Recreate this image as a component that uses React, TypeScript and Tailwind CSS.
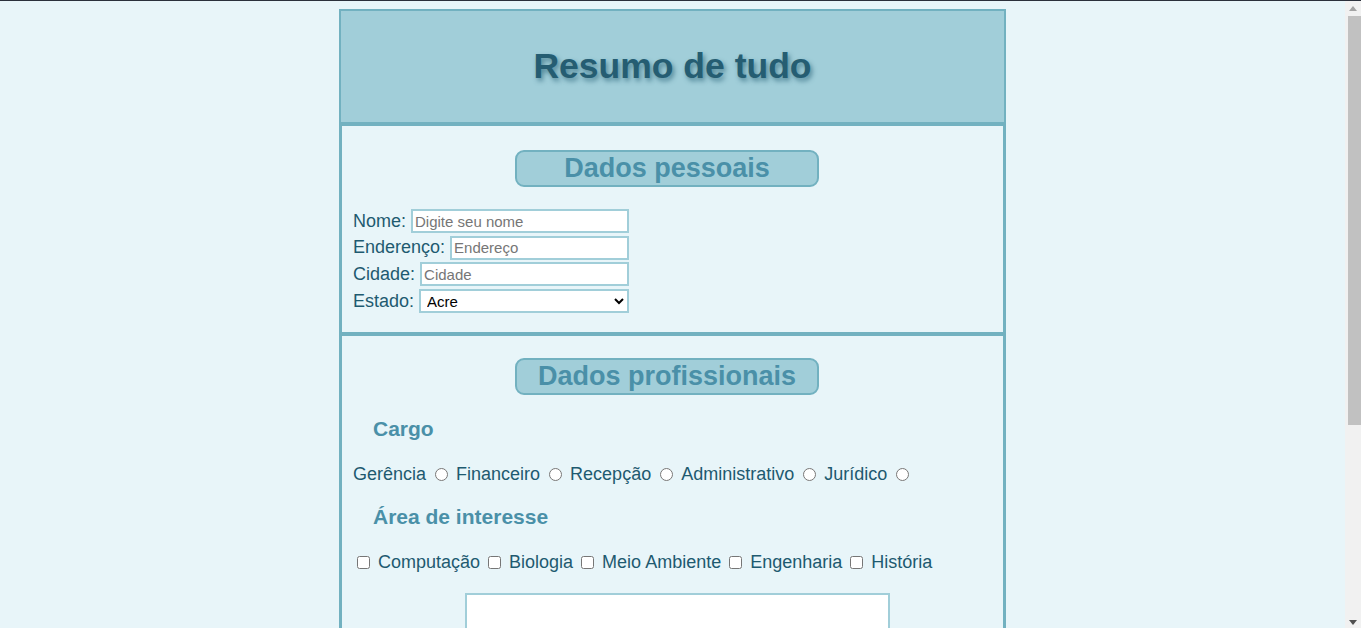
import React from "react";

const cargos = ["Gerência", "Financeiro", "Recepção", "Administrativo", "Jurídico"];
const areas = ["Computação", "Biologia", "Meio Ambiente", "Engenharia", "História"];

function Pill({ children }: { children: React.ReactNode }) {
  return (
    <div className="ml-[162px] flex h-[37px] w-[304px] items-center justify-center rounded-[9px] border-2 border-[#72b1c0] bg-[#a1ced9] text-[27px] font-bold leading-none text-[#4a90a8]">
      {children}
    </div>
  );
}

// barra de rolagem da janela (faz parte da captura)
function ScrollBar() {
  return (
    <div className="sticky top-0 flex h-[628px] w-[16px] shrink-0 flex-col bg-[#f1f1f1]">
      <div className="flex h-[14px] items-center justify-center">
        <svg width="8" height="5" viewBox="0 0 8 5">
          <path d="M0 5 L4 0 L8 5 Z" fill="#a3a3a3" />
        </svg>
      </div>
      <div className="ml-[3px] mt-[1px] h-[409px] w-[13px] bg-[#c1c1c1]" />
      <div className="flex-1" />
      <div className="flex h-[14px] items-center justify-center">
        <svg width="8" height="5" viewBox="0 0 8 5">
          <path d="M0 0 L8 0 L4 5 Z" fill="#505050" />
        </svg>
      </div>
    </div>
  );
}

export default function App() {
  return (
    <div className="bg-[#e8f5f9] font-['Liberation_Sans',Arial,sans-serif]">
      <div className="h-px bg-[#2b303b]" />
      <div className="flex items-start">
        <div className="min-w-0 flex-1 pb-[8px] pt-[8px]">
          <main className="mx-auto w-[667px]">
            {/* Cabeçalho */}
            <header className="flex h-[115px] items-center justify-center border-2 border-[#72b1c0] bg-[#a1ced9]">
              <h1 className="text-[35.5px] font-bold leading-none text-[#255d72] [text-shadow:2px_3px_5px_#4f8597]">
                Resumo de tudo
              </h1>
            </header>

            {/* Dados pessoais */}
            <section className="border-x-[3px] border-y-2 border-[#72b1c0] px-[11px] pb-[19px] pt-[24px]">
              <Pill>Dados pessoais</Pill>
              <div className="mt-[22px] flex w-[276px] flex-col gap-[2.7px] text-[18px] text-[#1e5a70]">
                <label className="flex h-[24px] items-center">
                  <span className="mr-[5px]">Nome:</span>
                  <input
                    type="text"
                    placeholder="Digite seu nome"
                    className="h-[24px] min-w-0 flex-1 border-2 border-[#a1ced9] bg-white px-[2px] text-[15px] text-black outline-none placeholder:text-[#767676]"
                  />
                </label>
                <label className="flex h-[24px] items-center">
                  <span className="mr-[5px]">Enderenço:</span>
                  <input
                    type="text"
                    placeholder="Endereço"
                    className="h-[24px] min-w-0 flex-1 border-2 border-[#a1ced9] bg-white px-[2px] text-[15px] text-black outline-none placeholder:text-[#767676]"
                  />
                </label>
                <label className="flex h-[24px] items-center">
                  <span className="mr-[5px]">Cidade:</span>
                  <input
                    type="text"
                    placeholder="Cidade"
                    className="h-[24px] min-w-0 flex-1 border-2 border-[#a1ced9] bg-white px-[2px] text-[15px] text-black outline-none placeholder:text-[#767676]"
                  />
                </label>
                <label className="flex h-[24px] items-center">
                  <span className="mr-[5px]">Estado:</span>
                  <select className="h-[24px] min-w-0 flex-1 border-2 border-[#a1ced9] bg-white pl-[2px] text-[15px] text-black outline-none">
                    <option>Acre</option>
                    <option>Alagoas</option>
                    <option>Amapá</option>
                    <option>Amazonas</option>
                    <option>Bahia</option>
                  </select>
                </label>
              </div>
            </section>

            {/* Dados profissionais */}
            <section className="border-x-[3px] border-y-2 border-[#72b1c0] px-[11px] pb-[120px] pt-[22px]">
              <Pill>Dados profissionais</Pill>

              <h3 className="ml-[20px] mt-[23px] text-[21px] font-bold leading-none text-[#4a90a8]">Cargo</h3>
              <div className="mt-[26px] flex h-[18px] items-center text-[18px] leading-none text-[#1e5a70]">
                {cargos.map((c) => (
                  <React.Fragment key={c}>
                    <span>{c}</span>
                    <input type="radio" name="cargo" className="ml-[9px] mr-[8px] h-[13px] w-[13px]" />
                  </React.Fragment>
                ))}
              </div>

              <h3 className="ml-[20px] mt-[23px] text-[21px] font-bold leading-none text-[#4a90a8]">Área de interesse</h3>
              <div className="mt-[26px] flex h-[18px] items-center text-[18px] leading-none text-[#1e5a70]">
                {areas.map((a, i) => (
                  <React.Fragment key={a}>
                    <input
                      type="checkbox"
                      className={i === 0 ? "ml-[4px] mr-[8px] h-[13px] w-[13px]" : "ml-[8px] mr-[8px] h-[13px] w-[13px]"}
                    />
                    <span>{a}</span>
                  </React.Fragment>
                ))}
              </div>

              <textarea className="ml-[112px] mt-[22px] block h-[150px] w-[425px] resize-none border-2 border-[#a1ced9] bg-white outline-none" />
            </section>
          </main>
        </div>
        <ScrollBar />
      </div>
    </div>
  );
}
